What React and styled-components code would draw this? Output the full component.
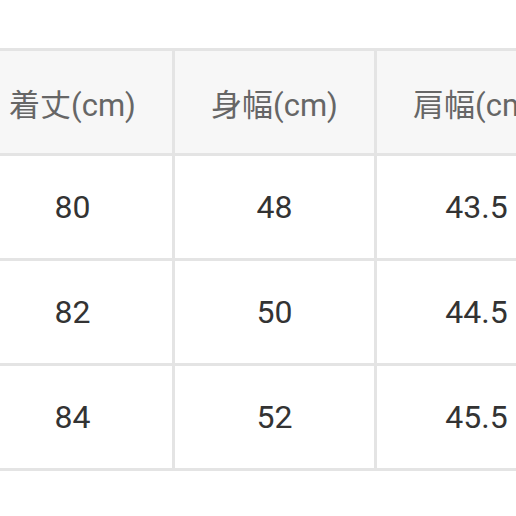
import React from "react";
import styled, { createGlobalStyle } from "styled-components";

const Global = createGlobalStyle`
  html, body { margin: 0; padding: 0; background: #fff; overflow: hidden; }
  body { font-family: Roboto, "Noto Sans CJK JP", sans-serif; }
`;

const Page = styled.div`
  width: 516px;
  height: 516px;
  overflow: hidden;
  padding-top: 48px;
  box-sizing: border-box;
`;

const Table = styled.div`
  display: grid;
  grid-template-columns: repeat(3, 199px);
  grid-auto-rows: 102px;
  gap: 3px;
  padding: 3px;
  background: #e4e4e4;
  width: max-content;
  margin-left: -30px;
`;

const Cell = styled.div`
  display: flex;
  align-items: center;
  justify-content: center;
  background: ${(p) => (p.$head ? "#f7f7f7" : "#ffffff")};
  color: ${(p) => (p.$head ? "#666666" : "#333333")};
  font-size: ${(p) => (p.$head ? "31px" : "32px")};
  font-family: Roboto, "Noto Sans CJK JP", sans-serif;
  white-space: nowrap;
`;

const head = ["着丈(cm)", "身幅(cm)", "肩幅(cm)"];
const rows = [
  ["80", "48", "43.5"],
  ["82", "50", "44.5"],
  ["84", "52", "45.5"],
];

export default function App() {
  return (
    <Page>
      <Global />
      <Table>
        {head.map((h) => (
          <Cell key={h} $head>
            {h}
          </Cell>
        ))}
        {rows.map((r, i) =>
          r.map((v, j) => <Cell key={`${i}-${j}`}>{v}</Cell>)
        )}
      </Table>
    </Page>
  );
}
